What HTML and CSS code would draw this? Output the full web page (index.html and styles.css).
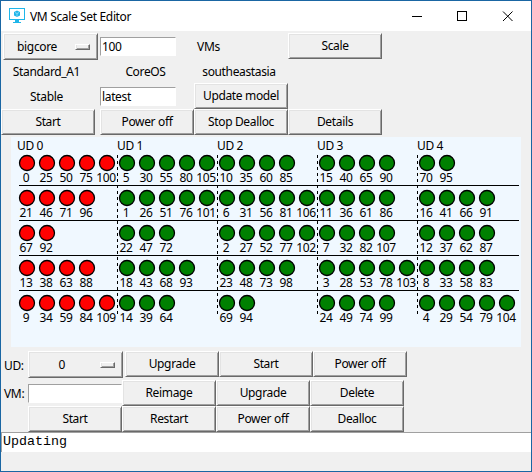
FILE: index.html
```html
<!DOCTYPE html>
<html lang="en">
<head>
<meta charset="utf-8">
<title>VM Scale Set Editor</title>
<link rel="stylesheet" href="styles.css">
</head>
<body>
<div class="window">
  <header class="titlebar">
    <svg class="logo" width="16" height="16" viewBox="0 0 16 16" shape-rendering="crispEdges">
      <path d="M0 0h16v12h-16zM1 1v10h14v-10z" fill="#1fb6ea" fill-rule="evenodd"/>
      <path d="M6 12h4v2h2v1H4v-1h2z" fill="#1fb6ea"/>
      <path d="M8 2.5l3 1.5v3.500l-3 1.500-3-1.500V4z" fill="#1fb6ea" shape-rendering="auto"/>
      <path d="M6 4.500l2 1 2-1M8 5.500v3" fill="none" stroke="#c8effb" stroke-width=".6" shape-rendering="auto"/>
    </svg>
    <h1 class="title">VM Scale Set Editor</h1>
    <svg class="controls" width="102" height="11" viewBox="0 0 102 11" fill="none" stroke="#000">
      <path d="M0 5.500h10M45.500.5h9v9h-9z" shape-rendering="crispEdges"/>
      <path d="M91 .5l9.500 9.500M100.500.5L91 10"/>
    </svg>
  </header>

  <section class="model">
    <button class="button menu">bigcore<i class="knob"></i></button>
    <input class="entry" value="100">
    <span class="label vms">VMs</span>
    <button class="button">Scale</button>

    <span class="label">Standard_A1</span>
    <span class="label os">CoreOS</span>
    <span class="label region">southeastasia</span>
    <span></span>

    <span class="label">Stable</span>
    <input class="entry" value="latest">
    <button class="button">Update model</button>
    <span></span>

    <button class="button">Start</button>
    <button class="button">Power off</button>
    <button class="button">Stop Dealloc</button>
    <button class="button">Details</button>
  </section>

  <svg class="canvas" id="canvas" width="510" height="210" viewBox="11 137 510 210"></svg>

  <section class="domain">
    <span class="label">UD:</span>
    <button class="button menu">0<i class="knob"></i></button>
    <button class="button first">Upgrade</button>
    <button class="button">Start</button>
    <button class="button">Power off</button>
  </section>
  <section class="machine">
    <span class="label">VM:</span>
    <input class="entry wide">
    <button class="button">Reimage</button>
    <button class="button">Upgrade</button>
    <button class="button">Delete</button>
    <span></span>
    <button class="button">Start</button>
    <button class="button">Restart</button>
    <button class="button">Power off</button>
    <button class="button">Dealloc</button>
  </section>
  <div class="status">Updating</div>
</div>
<script src="script.js"></script>
</body>
</html>
```
FILE: styles.css
```css
* { box-sizing: border-box; }

body {
  margin: 0;
  font: 12px "Noto Sans", "Open Sans", sans-serif;
  letter-spacing: -0.35px;
  color: #000;
}

.window {
  width: 532px;
  height: 472px;
  border: 1px solid #1a66a3;
  background: #f0f0f0;
  overflow: hidden;
}

.titlebar {
  display: flex;
  align-items: center;
  height: 30px;
  padding: 0 17px 0 8px;
  background: #fff;
}

.title {
  margin: 0 auto 0 5px;
  font-size: 12px;
  font-weight: 400;
}

.model {
  display: grid;
  grid-template-columns: 99px 94px 94px 94px;
  grid-template-rows: 27px 23px 26px 26px;
  padding-top: 2px;
  align-items: center;
}

.button {
  width: 94px;
  height: 26px;
  margin: 0;
  padding: 0 0 1px;
  border: 1px solid;
  border-color: #fff #696969 #696969 #fff;
  box-shadow: inset 1px 1px #e3e3e3, inset -1px -1px #a0a0a0;
  background: #f0f0f0;
  color: #000;
  font: inherit;
  letter-spacing: inherit;
  text-align: center;
  align-self: start;
}

.menu {
  display: flex;
  align-items: center;
  justify-content: flex-end;
  width: 95px;
  height: 27px;
  padding: 0 7px 0 0;
}

.model .menu { margin-left: 2px; gap: 18px; }

.domain .menu { gap: 35px; }

.knob {
  width: 15px;
  height: 6px;
  border: 1px solid;
  border-color: #fff #696969 #696969 #fff;
  box-shadow: inset 1px 0 #e3e3e3, inset -1px -1px #a0a0a0;
}

.entry {
  width: 76px;
  height: 19px;
  padding: 0 0 0 1px;
  border: 1px solid;
  border-color: #a0a0a0 #fff #fff #a0a0a0;
  border-radius: 0;
  background: #fff;
  color: #000;
  font: inherit;
  letter-spacing: inherit;
  outline: 0;
}

.entry.wide { width: 94px; }

.label {
  justify-self: center;
  white-space: nowrap;
}

.model .label { margin-right: 8px; }
.model .vms { margin-right: 65px; }
.model .os { margin-right: 3px; }
.model .region { margin-right: 4px; }

.canvas {
  display: block;
  margin: 2px 0 4px 10px;
  background: #f0f8ff;
}

.canvas .id { text-anchor: middle; }
.canvas circle { stroke: #000; stroke-width: 1.3; }
.canvas .off { fill: #f00; }
.canvas .on { fill: #008000; }
.canvas path { stroke: #000; fill: none; }
.canvas .dashed { stroke-dasharray: 3 3; }

.domain {
  display: flex;
  align-items: center;
  height: 29px;
}

.domain .button { align-self: flex-start; }
.domain .label { width: 24px; margin-left: 3px; }
.domain .first { margin-left: 2px; }

.machine {
  display: grid;
  grid-template-columns: 27px repeat(4, 94px);
  grid-template-rows: 26px 26px;
  align-items: center;
}

.machine .label { justify-self: start; margin-left: 3px; }

.status {
  height: 20px;
  padding-left: 1px;
  border-top: 1px solid #a0a0a0;
  border-left: 1px solid #a0a0a0;
  background: #fff;
  font: 13.33px/18px "Liberation Mono", monospace;
  letter-spacing: 0;
}
```
FILE: script.js
```js
// Rows are fault domains, columns are update domains.
const grid = [
  [[0, 25, 50, 75, 100], [5, 30, 55, 80, 105], [10, 35, 60, 85], [15, 40, 65, 90], [70, 95]],
  [[21, 46, 71, 96], [1, 26, 51, 76, 101], [6, 31, 56, 81, 106], [11, 36, 61, 86], [16, 41, 66, 91]],
  [[67, 92], [22, 47, 72], [2, 27, 52, 77, 102], [7, 32, 82, 107], [12, 37, 62, 87]],
  [[13, 38, 63, 88], [18, 43, 68, 93], [23, 48, 73, 98], [3, 28, 53, 78, 103], [8, 33, 58, 83]],
  [[9, 34, 59, 84, 109], [14, 39, 64], [69, 94], [24, 49, 74, 99], [4, 29, 54, 79, 104]]
];
let out = '';
for (let c = 0; c < 5; c++) {
  out += `<text x="${17 + c * 100}" y="150">UD ${c}</text>`;
  if (c) out += `<path class="dashed" d="M${17.5 + c * 100} 155V314"/>`;
}
grid.forEach((row, r) => {
  if (r) out += `<path d="M19 ${150.5 + r * 35}H519"/>`;
  row.forEach((ids, c) => ids.forEach((id, i) => {
    const x = 27 + c * 100 + i * 20;
    out += `<circle class="${c ? 'on' : 'off'}" cx="${x}" cy="${163 + r * 35}" r="7.5"/>`;
    out += `<text class="id" x="${x - 1}" y="${182 + r * 35}">${id}</text>`;
  }));
});
document.getElementById('canvas').innerHTML = out;
```
